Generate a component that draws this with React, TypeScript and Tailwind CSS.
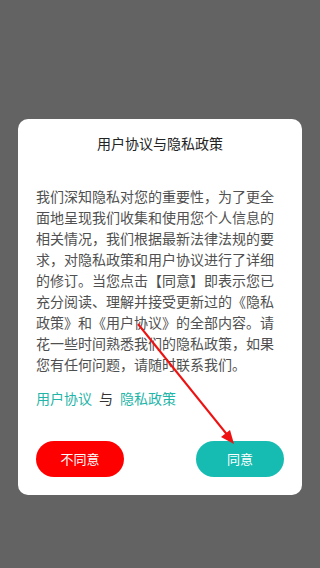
import React from "react";

const lines = [
  "我们深知隐私对您的重要性，为了更全",
  "面地呈现我们收集和使用您个人信息的",
  "相关情况，我们根据最新法律法规的要",
  "求，对隐私政策和用户协议进行了详细",
  "的修订。当您点击【同意】即表示您已",
  "充分阅读、理解并接受更新过的《隐私",
  "政策》和《用户协议》的全部内容。请",
  "花一些时间熟悉我们的隐私政策，如果",
  "您有任何问题，请随时联系我们。",
];

export default function App() {
  return (
    <div
      className="relative w-[320px] h-[568px] bg-[#636363] pt-[119px] px-[18px] overflow-hidden"
      style={{ fontFamily: '"Noto Sans CJK SC", "Noto Sans", sans-serif' }}
    >
      <div className="bg-white rounded-[10px] flex flex-col pt-[14px] pb-[18px] px-[18px]">
        <div className="text-center text-[14px] leading-[20px] text-[#222]">用户协议与隐私政策</div>
        <div className="mt-[33px] text-[14px] leading-[21px] text-[#505050]">
          {lines.map((l, i) => (
            <div key={i} className="whitespace-nowrap">{l}</div>
          ))}
        </div>
        <div className="mt-[13px] text-[14px] leading-[20px] flex gap-[7px]">
          <span className="text-[#1fb5a8]">用户协议</span>
          <span className="text-[#333]">与</span>
          <span className="text-[#1fb5a8]">隐私政策</span>
        </div>
        <div className="mt-[33px] flex justify-between">
          <div className="w-[88px] h-[36px] rounded-full bg-[#ff0000] text-white text-[13px] flex items-center justify-center">不同意</div>
          <div className="w-[88px] h-[36px] rounded-full bg-[#16bcb1] text-white text-[13px] flex items-center justify-center">同意</div>
        </div>
      </div>
      <svg className="absolute left-0 top-0" width="320" height="568" viewBox="0 0 320 568">
        <line x1="138" y1="324" x2="229" y2="437" stroke="#ee1111" strokeWidth="2" />
        <polygon points="234,444 221,437 230,430" fill="#ee1111" />
      </svg>
    </div>
  );
}
